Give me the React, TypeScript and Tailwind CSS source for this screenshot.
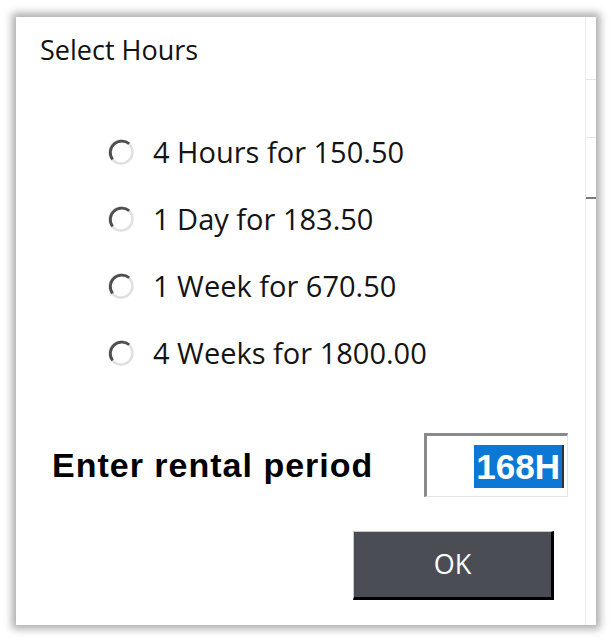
import React from "react";

function Radio() {
  return (
    <svg width="28" height="28" viewBox="0 0 28 28" className="shrink-0">
      <circle cx="14" cy="14" r="11.5" fill="#ffffff" stroke="#e0e0e0" strokeWidth="2.5" />
      <path d="M 5.6 21.5 A 11.5 11.5 0 0 1 22.2 5.8" fill="none" stroke="#4e4e4e" strokeWidth="2.8" />
    </svg>
  );
}

const options = [
  "4 Hours for 150.50",
  "1 Day for 183.50",
  "1 Week for 670.50",
  "4 Weeks for 1800.00",
];

export default function App() {
  return (
    <div className="min-h-[641px] w-[614px] bg-white pt-[17px] pl-[16px]">
      <div className="flex h-[608px] w-[580px] bg-white shadow-[0_0_8px_4px_rgba(0,0,0,0.33)]">
        <div className="flex flex-1 flex-col">
          <div
            className="pl-[24px] pt-[15px] text-[27px] leading-[36px] text-[#111]"
            style={{ fontFamily: '"Open Sans", "Noto Sans", sans-serif' }}
          >
            Select Hours
          </div>
          <div className="mt-[50px] flex flex-col">
            {options.map((o) => (
              <div key={o} className="flex h-[67px] items-center gap-[18px] pl-[91px]">
                <Radio />
                <span
                  className="text-[29px] leading-none text-[#141414]"
                  style={{ fontFamily: '"Open Sans", "Noto Sans", sans-serif' }}
                >
                  {o}
                </span>
              </div>
            ))}
          </div>
          <div className="mt-[47px] flex items-center pl-[36px]">
            <span
              className="text-[34px] font-bold leading-none tracking-[1px] text-black"
              style={{ fontFamily: '"Liberation Sans", Arial, sans-serif' }}
            >
              Enter rental period
            </span>
            <div className="ml-auto mr-[17px] flex h-[64px] w-[144px] items-center justify-end border-t-[3px] border-l-[3px] border-r border-b border-t-[#8a8a8a] border-l-[#8a8a8a] border-r-[#e4e4e4] border-b-[#e4e4e4] bg-white pr-[3px]">
              <span
                className="bg-[#0a78d4] px-[2px] text-[35px] font-bold leading-[43px] text-white"
                style={{ fontFamily: '"Liberation Sans", Arial, sans-serif' }}
              >
                168H
              </span>
              <span className="h-[43px] w-[2px] bg-[#333]" />
            </div>
          </div>
          <div className="mt-[34px] flex justify-end pr-[31px]">
            <button
              className="flex h-[69px] w-[201px] items-center justify-center border-t border-l border-r-[3px] border-b-[3px] border-t-[#c8c8c8] border-l-[#c8c8c8] border-r-black border-b-black bg-[#4b4d55] text-[27px] text-white"
              style={{ fontFamily: '"Open Sans", "Noto Sans", sans-serif' }}
            >
              OK
            </button>
          </div>
        </div>
        <div className="flex w-[11px] flex-col border-l border-[#ececec]">
          <div className="h-[63px] border-b border-[#e6e6e6]" />
          <div className="h-[58px] border-b border-[#e6e6e6]" />
          <div className="h-[61px] border-b-2 border-[#7a7a7a]" />
          <div className="flex-1" />
        </div>
      </div>
    </div>
  );
}
